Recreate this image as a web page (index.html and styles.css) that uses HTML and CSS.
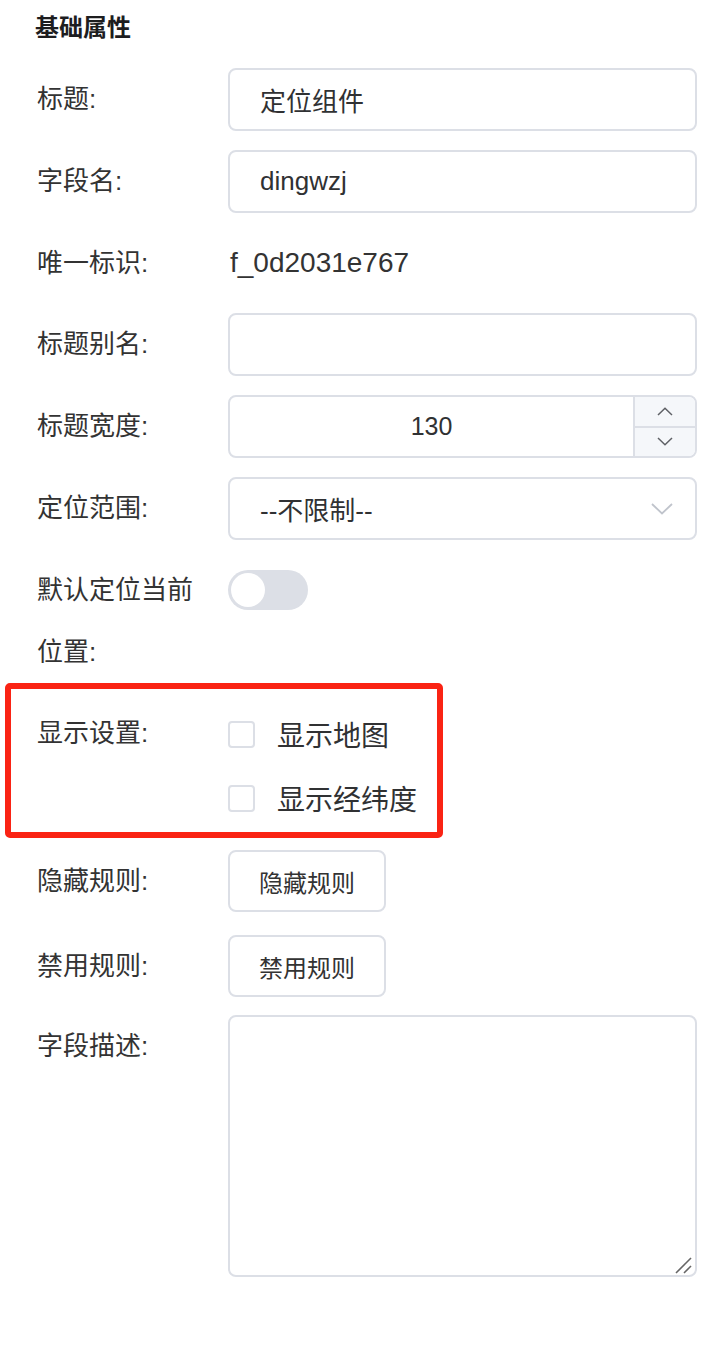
FILE: index.html
```html
<!DOCTYPE html>
<html lang="zh-CN">
<head>
<meta charset="utf-8">
<title>基础属性</title>
<link rel="stylesheet" href="styles.css">
</head>
<body>
<div class="panel">
  <div class="section-title">基础属性</div>
  <form class="form">
    <div class="form-item">
      <label class="form-label">标题:</label>
      <div class="form-content"><input class="input" type="text" value="定位组件"></div>
    </div>
    <div class="form-item">
      <label class="form-label">字段名:</label>
      <div class="form-content"><input class="input" type="text" value="dingwzj"></div>
    </div>
    <div class="form-item form-item-static">
      <label class="form-label">唯一标识:</label>
      <div class="form-content"><span class="static-text">f_0d2031e767</span></div>
    </div>
    <div class="form-item">
      <label class="form-label">标题别名:</label>
      <div class="form-content"><input class="input" type="text" value=""></div>
    </div>
    <div class="form-item">
      <label class="form-label">标题宽度:</label>
      <div class="form-content">
        <div class="input-number">
          <span class="number-value">130</span>
          <div class="number-controls">
            <span class="number-btn">
              <svg width="16" height="9" viewBox="0 0 16 9"><polyline points="1,8 8,1.2 15,8" fill="none" stroke="#5f6166" stroke-width="1.5"/></svg>
            </span>
            <span class="number-btn number-btn-down">
              <svg width="16" height="9" viewBox="0 0 16 9"><polyline points="1,1 8,7.8 15,1" fill="none" stroke="#5f6166" stroke-width="1.5"/></svg>
            </span>
          </div>
        </div>
      </div>
    </div>
    <div class="form-item">
      <label class="form-label">定位范围:</label>
      <div class="form-content">
        <div class="select">
          <span class="select-text">--不限制--</span>
          <svg class="select-arrow" width="22" height="12" viewBox="0 0 22 12"><polyline points="1,1 11,10.5 21,1" fill="none" stroke="#c0c4cc" stroke-width="1.8"/></svg>
        </div>
      </div>
    </div>
    <div class="form-item form-item-switch">
      <label class="form-label">默认定位当前位置:</label>
      <div class="form-content">
        <span class="switch"><span class="switch-knob"></span></span>
      </div>
    </div>
    <div class="form-item form-item-checks">
      <label class="form-label">显示设置:</label>
      <div class="form-content">
        <div class="checkbox-group">
          <label class="checkbox"><span class="checkbox-box"></span><span class="checkbox-label">显示地图</span></label>
          <label class="checkbox"><span class="checkbox-box"></span><span class="checkbox-label">显示经纬度</span></label>
        </div>
      </div>
    </div>
    <div class="form-item form-item-btn">
      <label class="form-label">隐藏规则:</label>
      <div class="form-content"><button type="button" class="btn">隐藏规则</button></div>
    </div>
    <div class="form-item form-item-btn2">
      <label class="form-label">禁用规则:</label>
      <div class="form-content"><button type="button" class="btn">禁用规则</button></div>
    </div>
    <div class="form-item">
      <label class="form-label">字段描述:</label>
      <div class="form-content">
        <div class="textarea-wrap">
          <textarea class="textarea"></textarea>
          <svg class="resize-grip" width="20" height="20" viewBox="0 0 20 20"><line x1="2" y1="17" x2="17" y2="2" stroke="#666" stroke-width="1.6"/><line x1="10" y1="17" x2="17" y2="10" stroke="#666" stroke-width="1.6"/></svg>
        </div>
      </div>
    </div>
  </form>
  <div class="highlight"></div>
</div>
</body>
</html>
```

FILE: styles.css
```css
* {
  box-sizing: border-box;
}

body {
  margin: 0;
  background: #fff;
  font-family: "Liberation Sans", "Noto Sans CJK SC", sans-serif;
  color: #333;
}

.panel {
  position: relative;
  width: 717px;
  height: 1363px;
  padding: 0 20px 0 35px;
  overflow: hidden;
}

.section-title {
  font-family: "Noto Sans CJK SC", sans-serif;
  font-size: 24px;
  font-weight: 700;
  line-height: 52px;
  color: #1d1d1f;
  margin: 0 0 16px;
}

.form {
  margin: 0;
}

.form-item {
  display: flex;
  margin-bottom: 19px;
}

.form-label {
  flex: 0 0 193px;
  padding: 0 24px 0 2px;
  font-size: 26px;
  line-height: 63px;
  color: #333;
}

.form-content {
  flex: 1;
  min-width: 0;
  display: flex;
  align-items: flex-start;
}

.input {
  width: 100%;
  height: 63px;
  border: 2px solid #dcdfe6;
  border-radius: 8px;
  padding: 0 30px;
  font-family: "Liberation Sans", "Noto Sans CJK SC", sans-serif;
  font-size: 26px;
  color: #303133;
  background: #fff;
  outline: none;
}

.form-item-static .form-label {
  line-height: 62px;
}

.static-text {
  font-size: 28px;
  line-height: 62px;
  padding-left: 2px;
  color: #333;
}

.input-number {
  width: 100%;
  height: 63px;
  display: flex;
  border: 2px solid #dcdfe6;
  border-radius: 8px;
  overflow: hidden;
}

.number-value {
  flex: 1;
  text-align: center;
  font-size: 25px;
  line-height: 59px;
  color: #303133;
}

.number-controls {
  flex: 0 0 62px;
  display: flex;
  flex-direction: column;
  background: #f5f7fa;
  border-left: 2px solid #dcdfe6;
}

.number-btn {
  flex: 1;
  display: flex;
  align-items: center;
  justify-content: center;
}

.number-btn-down {
  border-top: 2px solid #dcdfe6;
}

.select {
  width: 100%;
  height: 63px;
  display: flex;
  align-items: center;
  justify-content: space-between;
  border: 2px solid #dcdfe6;
  border-radius: 8px;
  padding: 0 22px 0 30px;
}

.select-text {
  font-size: 26px;
  color: #303133;
}

.form-item-switch .form-label {
  line-height: 62px;
}

.switch {
  margin-top: 11px;
  width: 80px;
  height: 40px;
  border-radius: 20px;
  background: #dcdfe6;
  padding: 3px;
  display: flex;
}

.switch-knob {
  width: 34px;
  height: 34px;
  border-radius: 50%;
  background: #fff;
}

.form-item-checks {
  margin-bottom: 20px;
}

.form-item-checks .form-label {
  line-height: 63px;
}

.checkbox-group {
  display: flex;
  flex-direction: column;
}

.checkbox {
  height: 64px;
  display: flex;
  align-items: center;
}

.checkbox-box {
  width: 27px;
  height: 27px;
  border: 2px solid #dcdfe6;
  border-radius: 4px;
  background: #fff;
}

.checkbox-label {
  margin-left: 22px;
  font-family: "Noto Sans CJK SC", sans-serif;
  font-size: 28px;
  color: #303133;
}

.form-item-btn {
  margin-bottom: 22px;
}

.form-item-btn2 {
  margin-bottom: 17px;
}

.btn {
  width: 158px;
  height: 62px;
  border: 2px solid #dcdfe6;
  border-radius: 8px;
  background: #fff;
  font-family: "Noto Sans CJK SC", sans-serif;
  font-size: 24px;
  color: #333;
  padding: 0;
}

.textarea-wrap {
  position: relative;
  width: 100%;
  height: 262px;
}

.textarea {
  display: block;
  width: 100%;
  height: 262px;
  border: 2px solid #dcdfe6;
  border-radius: 8px;
  resize: none;
  outline: none;
  background: #fff;
}

.resize-grip {
  position: absolute;
  right: 3px;
  bottom: 1px;
}

.highlight {
  position: absolute;
  left: 5px;
  top: 683px;
  width: 438px;
  height: 155px;
  border: 6px solid #fa2314;
  border-radius: 5px;
  pointer-events: none;
}
```
